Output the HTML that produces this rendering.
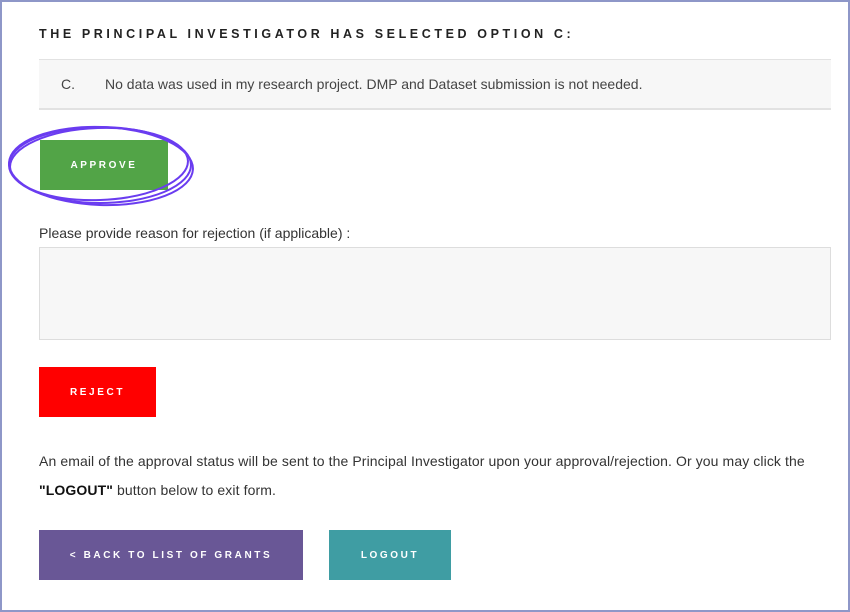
<!DOCTYPE html>
<html><head><style>
html,body{margin:0;padding:0}
body{width:850px;height:612px;position:relative;background:#fff;font-family:"Liberation Sans",sans-serif;overflow:hidden}
.frame{position:absolute;left:0;top:0;width:846px;height:608px;border:2px solid #8e97c8}
.h{position:absolute;left:39px;top:27px;font-size:12.5px;font-weight:bold;letter-spacing:3.6px;color:#222}
.opt{position:absolute;left:39px;top:59px;width:792px;height:48px;background:#f7f7f7;border-top:1px solid #e2e2e2;border-bottom:2px solid #e2e2e2}
.opt span{position:absolute;top:16px;font-size:14px;color:#444}
.btn{position:absolute;color:#fff;font-weight:bold;font-size:10px;letter-spacing:2.6px;display:flex;align-items:center;justify-content:center}
.lbl{position:absolute;left:39px;top:225px;font-size:14px;color:#333}
.ta{position:absolute;left:39px;top:247px;width:790px;height:91px;border:1px solid #ddd;background:#f7f7f7}
.p{position:absolute;left:39px;top:447px;width:800px;font-size:14px;color:#333;line-height:29px;letter-spacing:0.1px}
</style></head><body>
<div class="frame"></div>
<div class="h">THE PRINCIPAL INVESTIGATOR HAS SELECTED OPTION C:</div>
<div class="opt"><span style="left:22px">C.</span><span style="left:66px">No data was used in my research project. DMP and Dataset submission is not needed.</span></div>
<div class="btn" style="left:40px;top:140px;width:128px;height:50px;background:#52a447">APPROVE</div>
<svg style="position:absolute;left:0;top:118px" width="200" height="95" viewBox="0 0 200 95">
<g fill="none" stroke="#6a3cf0" stroke-width="2">
<ellipse cx="100" cy="47" rx="91" ry="38"/>
<ellipse cx="99" cy="46" rx="89" ry="36" transform="rotate(-2 99 46)"/>
<ellipse cx="101" cy="48" rx="92" ry="39" transform="rotate(2 101 48)"/>
</g></svg>
<div class="lbl">Please provide reason for rejection (if applicable) :</div>
<div class="ta"></div>
<div class="btn" style="left:39px;top:367px;width:117px;height:50px;background:#ff0000">REJECT</div>
<div class="p">An email of the approval status will be sent to the Principal Investigator upon your approval/rejection. Or you may click the<br><b style="color:#111">"LOGOUT"</b> button below to exit form.</div>
<div class="btn" style="left:39px;top:530px;width:264px;height:50px;background:#695796">&lt; BACK TO LIST OF GRANTS</div>
<div class="btn" style="left:329px;top:530px;width:122px;height:50px;background:#3f9da3">LOGOUT</div>
</body></html>
